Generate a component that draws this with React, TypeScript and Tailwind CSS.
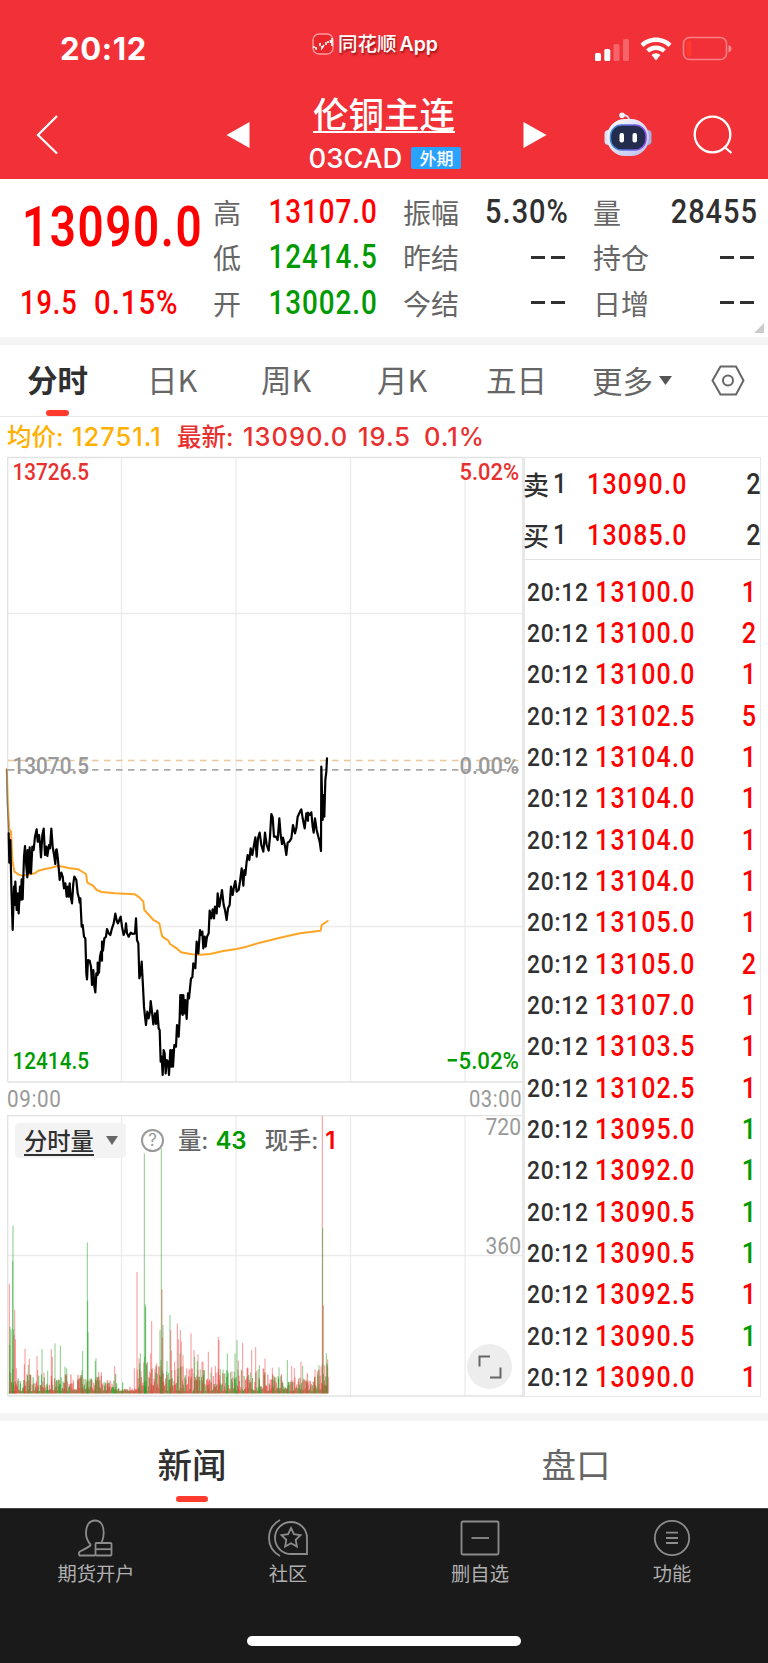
import { Fragment } from 'react'
import type { ReactNode } from 'react'
import { clsx } from 'clsx'

const CJK = "font-['Noto_Sans_CJK_SC',sans-serif]"
const LATIN = "font-['Inter','Noto_Sans_CJK_SC',sans-serif]"

interface INumProps {
    children: ReactNode;
    className?: string;
}

// 窄体数字
function Num({ children, className }: INumProps) {
    return (
        <span
            className={clsx(
                "inline-block whitespace-pre font-['Roboto',sans-serif]",
                className
            )}
        >
            {children}
        </span>
    )
}

function StatusBar() {
    return (
        <div className={clsx("flex h-[92px] items-start text-white", LATIN)}>
            <div className="w-[312px] pl-[60px] pt-[33px] text-[31px] font-bold leading-[32px] tracking-[0.02em]">20:12</div>
            <div className="flex items-center gap-[4px] pt-[31px]">
                <svg width="22" height="22" viewBox="0 0 22 22" fill="none">
                    <rect x="1" y="1" width="20" height="20" rx="6" fill="#e8262c" stroke="#ff9a9c" strokeWidth="1.4" />
                    <path d="M2 13v2M4 14v2h1M8 10v3M10 13v2l2-3M14 9v3M16 8v2M18.500 7v3M20 5v8" stroke="#fff" strokeWidth="1.6" />
                </svg>
                <div className="whitespace-nowrap text-[19.5px] font-medium leading-[26px] [text-shadow:1px_2px_2px_rgba(90,0,0,0.55)]">
                    同花顺<span className="ml-[3px] font-semibold">App</span>
                </div>
            </div>
            <div className="ml-auto flex items-center pr-[36px] pt-[36px]">
                <svg width="35" height="24" viewBox="0 0 35 24" fill="#fff">
                    <rect x="0" y="16" width="6" height="8" rx="1.6" />
                    <rect x="9.3" y="12" width="6" height="12" rx="1.6" />
                    <rect x="18.5" y="7" width="6" height="17" rx="1.6" opacity="0.25" />
                    <rect x="28" y="2" width="6" height="22" rx="1.6" opacity="0.25" />
                </svg>
                <svg className="ml-[10px]" width="32" height="24" viewBox="0 0 32 24" fill="#fff">
                    <path d="M16 0.5c6 0 11.400 2.300 15.500 6.200l-3 3.200C25.200 6.800 20.800 5 16 5S6.800 6.800 3.500 9.900l-3-3.200C4.600 2.800 10 .5 16 .5z" />
                    <path d="M16 8.500c3.800 0 7.300 1.500 9.900 3.900l-3.100 3.200C21 13.900 18.600 12.900 16 12.900s-5 1-6.800 2.700l-3.100-3.200C8.700 10 12.200 8.500 16 8.500z" />
                    <path d="M16 16.300c1.700 0 3.300.7 4.400 1.800L16 23.500l-4.400-5.400c1.100-1.100 2.700-1.800 4.400-1.800z" />
                </svg>
                <svg className="ml-[10px]" width="50" height="25" viewBox="0 0 50 25" fill="none">
                    <rect x="1.500" y="1.500" width="43" height="22" rx="6" stroke="#fff" strokeOpacity="0.4" strokeWidth="1.600" />
                    <rect x="4.500" y="4.500" width="5" height="16" rx="2" fill="#ff3b30" />
                    <path d="M46.500 9v7.500q3-1 3-3.700t-3-3.800z" fill="#fff" fillOpacity="0.45" />
                </svg>
            </div>
        </div>
    )
}

function Robot() {
    return (
        <svg width="48" height="44" viewBox="0 0 48 44">
            <defs>
                <linearGradient id="shell" x1="0" y1="0" x2="1" y2="1">
                    <stop offset="0" stopColor="#ffffff" />
                    <stop offset="1" stopColor="#b9bdea" />
                </linearGradient>
                <linearGradient id="rim" x1="0" y1="0" x2="1" y2="0">
                    <stop offset="0" stopColor="#3b8bd6" />
                    <stop offset="1" stopColor="#8a4bea" />
                </linearGradient>
            </defs>
            <path d="M18 3.500q6-1.500 7.500 5" stroke="#d7d9f0" strokeWidth="2" fill="none" />
            <circle cx="18" cy="3.200" r="2.800" fill="#f3f3fb" />
            <rect x="0.500" y="18" width="8" height="15" rx="4" fill="#dfe0f4" />
            <rect x="39.500" y="18" width="8" height="15" rx="4" fill="#a9aedf" />
            <rect x="3" y="7" width="42" height="37" rx="18" fill="url(#shell)" />
            <rect x="6.500" y="13" width="35.500" height="25" rx="11" fill="#232c4d" stroke="url(#rim)" strokeWidth="1.400" />
            <rect x="15.500" y="21" width="4.500" height="9.500" rx="2" fill="#fff" />
            <rect x="28.500" y="21" width="4.500" height="9.500" rx="2" fill="#fff" />
        </svg>
    )
}

function Header() {
    return (
        <header className="h-[179px] bg-[#f13037]">
            <StatusBar />
            <div className="flex h-[87px] items-start text-white">
                <div className="w-[226px] pl-[36px] pt-[22px]">
                    <svg width="24" height="41" viewBox="0 0 24 41" fill="none" stroke="#fff" strokeWidth="2.200">
                        <path d="M21 2L2 21l19 18.500" />
                    </svg>
                </div>
                <svg className="mt-[30px]" width="24" height="26" viewBox="0 0 24 26" fill="#fff">
                    <path d="M23.500 0v26L0.500 13z" />
                </svg>
                <div className="flex w-[273px] flex-col items-center pr-[5px]">
                    <div className={clsx("mt-[3px] h-[38px] border-b-2 border-white text-[35.500px] font-medium leading-[36px]", CJK)}>伦铜主连</div>
                    <div className="mt-[10px] flex items-center gap-[9px] pl-[2px]">
                        <span className={clsx("text-[27.500px] font-medium leading-[30px]", LATIN)}>03CAD</span>
                        <span className={clsx("h-[22px] w-[50px] rounded-[2px] bg-[#29a3ff] text-center text-[17px] font-medium leading-[21px]", CJK)}>外期</span>
                    </div>
                </div>
                <svg className="mt-[30px]" width="24" height="26" viewBox="0 0 24 26" fill="#fff">
                    <path d="M0.500 0v26L23.500 13z" />
                </svg>
                <div className="ml-[57px] mt-[20px]">
                    <Robot />
                </div>
                <svg className="ml-[41px] mt-[22px]" width="40" height="41" viewBox="0 0 40 41" fill="none" stroke="#fff" strokeWidth="2.300">
                    <circle cx="19.500" cy="20.500" r="17.800" />
                    <path d="M31 32.500l7.500 6.500" />
                </svg>
            </div>
        </header>
    )
}

const stats = [
    [['高', '13107.0', 'text-[#ff0000]'], ['振幅', '5.30%', 'text-[#303030]'], ['量', '28455', 'text-[#303030]']],
    [['低', '12414.5', 'text-[#009a00]'], ['昨结', '--', 'text-[#303030]'], ['持仓', '--', 'text-[#303030]']],
    [['开', '13002.0', 'text-[#009a00]'], ['今结', '--', 'text-[#303030]'], ['日增', '--', 'text-[#303030]']],
]

function Quote() {
    return (
        <section className="flex h-[158px] bg-white">
            <div className="w-[213px] text-[#ff0000]">
                <div className="h-[88px] pl-[22px] pt-[19px]">
                    <Num className="origin-left scale-x-[0.825] text-[55.500px] font-semibold leading-[60px] tracking-[0.035em]">13090.0</Num>
                </div>
                <div className="flex h-[70px] pl-[20px] pt-[15px]">
                    <Num className="w-[74px] origin-left scale-x-[0.8] text-[34px] font-medium leading-[40px] tracking-[0.035em]">19.5</Num>
                    <Num className="origin-left scale-x-[0.86] text-[34px] font-medium leading-[40px] tracking-[0.035em]">0.15%</Num>
                </div>
            </div>
            <div className="grid h-[146.500px] w-[545px] grid-cols-[165px_25px_166px_24px_165px] grid-rows-3 pt-[10px]">
                {stats.map((row, r) =>
                    row.map(([label, value, color], c) => (
                        <Fragment key={label}>
                            {c > 0 && <span />}
                            <div className="flex h-[45.500px] items-center justify-between">
                                <span className={clsx("text-[28px] leading-[40px] text-[#666]", CJK)}>{label}</span>
                                {value === '--' ? (
                                    <span className="flex gap-[6px] pr-[4px]" aria-label={value}>
                                        <i className="h-[3px] w-[14px] bg-[#303030]" />
                                        <i className="h-[3px] w-[14px] bg-[#303030]" />
                                    </span>
                                ) : (
                                    <Num className={clsx(
                                        "origin-right text-[33.500px] font-medium leading-[40px] tracking-[0.035em]",
                                        c === 0 ? 'scale-x-[0.83]' : 'scale-x-[0.865]',
                                        color
                                    )}>{value}</Num>
                                )}
                            </div>
                        </Fragment>
                    ))
                )}
            </div>
            <svg className="-ml-[4px] mt-auto mb-[4px] shrink-0" width="10" height="10" viewBox="0 0 10 10">
                <path d="M10 0v10H0z" fill="#ccc" />
            </svg>
        </section>
    )
}

function PeriodTabs() {
    return (
        <nav className={clsx("flex h-[72px] border-b border-[#e8e8e8] text-[30.500px] leading-[69px] text-[#666]", CJK)}>
            <div className="flex w-[147px] flex-col pl-[27px] font-bold text-[#303030]">
                <span className="h-[65px]">分时</span>
                <i className="ml-[19px] h-[6px] w-[23px] rounded-full bg-[#ff3b30]" />
            </div>
            <span className="w-[114px]">日K</span>
            <span className="w-[116px]">周K</span>
            <span className="w-[109px]">月K</span>
            <span className="w-[106px]">五日</span>
            <div className="flex w-[120px] items-center gap-[6px]">
                更多
                <svg width="13" height="9" viewBox="0 0 13 9"><path d="M0 0h13L6.500 9z" fill="#555" /></svg>
            </div>
            <svg className="mt-[20px] -ml-[1px]" width="34" height="32" viewBox="0 0 34 32" fill="none" stroke="#666" strokeWidth="2">
                <path d="M9.500 1.500h15.500L32.500 15.500 25 29.500H9.500L1.500 15.500z" />
                <circle cx="17" cy="15.500" r="5" />
            </svg>
        </nav>
    )
}

// 单位为 1/3 像素
const pricePoints =
    '26,280 28,368 31,300 34,440 38,570 42,440 44,495 46,425 50,510 53,460 56,520 60,440 62,480 65,418 68,478 72,350 75,318 79,380 82,412 83,330 86,400 89,322 91,390 93,400 97,320 101,330 105,290 110,268 113,305 117,285 120,310 123,352 127,285 131,266 135,345 139,320 142,348 147,315 150,325 154,266 158,320 163,350 166,372 168,330 170,328 173,350 177,395 179,420 184,398 188,410 192,445 196,430 200,470 203,440 206,470 209,430 212,470 216,490 220,430 223,410 229,420 233,460 237,475 239,488 241,475 245,560 248,555 252,590 256,595 259,700 261,718 264,660 269,662 273,680 276,735 280,690 283,740 286,757 289,700 293,705 293,668 297,698 300,650 303,635 306,662 306,605 309,632 313,595 318,590 321,567 326,580 331,585 336,565 341,550 346,521 351,545 354,550 358,540 362,530 366,560 371,585 376,570 378,550 381,580 386,590 392,578 398,582 405,580 408,535 411,600 415,610 418,715 422,700 425,665 429,740 432,800 435,830 438,855 442,815 446,835 450,815 452,783 456,815 460,853 465,820 468,852 472,812 476,865 479,870 482,965 485,950 488,1005 491,930 494,940 497,1000 500,960 504,965 507,1005 511,930 514,980 517,930 519,980 523,915 528,920 531,855 536,890 539,835 541,765 543,820 545,765 548,825 550,765 553,820 556,780 560,837 564,760 567,775 570,745 573,715 577,712 580,670 586,685 590,605 595,640 600,570 604,585 607,575 610,625 614,590 617,620 621,590 626,580 629,512 634,535 638,508 642,535 645,500 650,520 653,460 658,500 662,475 666,450 671,495 675,510 680,540 684,505 689,495 693,440 698,465 702,440 706,423 710,455 716,450 720,425 725,385 730,437 733,390 736,405 740,365 743,345 748,360 752,325 757,345 762,315 766,292 770,350 774,295 779,278 784,315 790,335 795,278 800,315 806,332 810,290 814,222 818,232 822,290 828,290 833,300 838,235 842,285 846,312 849,293 855,318 859,345 863,308 868,305 874,295 879,255 885,280 889,265 893,230 900,215 904,208 908,235 914,265 919,220 924,242 924,218 930,225 934,217 938,260 941,278 945,235 950,270 955,290 959,305 963,333 964,80 968,240 970,165 973,230 976,120 979,95 981,55'

const averagePoints =
    '20,88 24,200 28,268 33,275 37,360 43,395 55,403 65,407 90,403 105,400 115,392 135,387 155,383 172,378 190,380 205,384 235,388 248,396 258,402 262,428 280,438 290,450 305,456 345,460 405,463 418,472 430,485 433,510 447,525 460,540 478,550 483,575 487,590 505,602 510,612 530,625 543,637 575,643 600,644 630,642 670,633 710,627 740,620 780,608 840,593 900,580 962,572 965,555 983,543'

const axisText = "font-['Roboto',sans-serif]"

function PriceChart() {
    return (
        <svg width="522" height="626" viewBox="0 0 522 626" fill="none" className="overflow-visible">
            <g stroke="#ebebeb" strokeWidth="1.300">
                <path d="M121.500 0v625M236 0v625M350.500 0v625M465 0v625M8 156.500h514M8 469.500h514" />
                <path d="M7.700 0.500H522M7.700 0v625M7.700 625H522" stroke="#e2e2e2" />
            </g>
            <path d="M8 303.500h514" stroke="#e8c89c" strokeWidth="1.700" strokeDasharray="6.500 5.500" />
            <path d="M8 312.800h514" stroke="#a8a8a8" strokeWidth="1.700" strokeDasharray="6.500 5.500" />
            <g className={axisText} fontSize="24.300" fontWeight="500">
                <text x="12.500" y="22.500" textLength="76.500" lengthAdjust="spacingAndGlyphs" fill="#e8302f">13726.5</text>
                <text x="459.500" y="22.500" textLength="59.500" lengthAdjust="spacingAndGlyphs" fill="#e8302f">5.02%</text>
                <text x="12.500" y="317" textLength="76.500" lengthAdjust="spacingAndGlyphs" fill="#999">13070.5</text>
                <text x="459.500" y="317" textLength="59.500" lengthAdjust="spacingAndGlyphs" fill="#999">0.00%</text>
                <text x="12.500" y="611.500" textLength="76.500" lengthAdjust="spacingAndGlyphs" fill="#009a00">12414.5</text>
                <text x="446" y="611.500" textLength="73" lengthAdjust="spacingAndGlyphs" fill="#009a00">−5.02%</text>
            </g>
            <g transform="translate(0 283) scale(0.33333)" strokeLinejoin="round" strokeLinecap="round">
                <polyline points={averagePoints} stroke="#ffa526" strokeWidth="6" />
                <polyline points="20,88 22,190 26,280" stroke="#777" strokeWidth="4" />
                <polyline points={pricePoints} stroke="#000" strokeWidth="6.600" />
            </g>
        </svg>
    )
}

// x、顶点 y、涨(r)跌(g)
const spikes =
    '28,612,r 30,740,g 29,795,g 33,748,g 39,437,g 38,543,g 40,748,g 44,690,r 42,765,r 46,778,r 49,865,r 75,806,r 73,853,r 88,836,r 85,855,g 111,828,r 113,870,r 126,807,g 132,878,r 143,872,g 154,807,r 157,830,r 165,790,g 181,797,g 195,860,g 200,865,g 248,813,g 246,870,g 262,487,g 263,662,g 264,757,g 288,835,g 286,843,g 296,876,r 304,876,r 322,900,r 344,858,r 347,882,g 368,907,g 390,920,r 403,865,r 411,576,r 417,835,r 421,820,g 419,850,g 433,220,g 436,673,g 437,682,g 434,830,g 440,850,g 452,820,r 455,723,r 457,865,r 470,850,r 480,750,g 484,205,g 486,628,r 489,735,g 487,772,r 483,840,g 501,843,g 510,705,g 512,750,r 514,812,r 524,845,r 532,730,r 535,778,r 541,750,r 544,784,r 549,825,r 540,820,g 560,865,r 573,760,r 582,810,r 584,830,g 594,823,r 592,843,g 606,845,r 609,845,r 625,815,r 635,862,r 646,858,r 655,771,r 657,780,r 682,820,g 680,870,g 705,820,g 711,780,g 715,842,r 728,788,r 741,865,r 743,862,r 755,810,r 767,801,r 778,855,g 795,836,r 817,863,r 837,862,g 862,840,g 875,858,r 883,865,r 903,845,r 908,858,g 922,880,r 945,868,r 957,856,g 967,108,r 968,443,g 970,675,r 974,856,r 979,820,g 983,838,r 981,850,g'

// 底部密集小量柱：分段高度包络
function envelope(x: number) {
    if (x < 50) return 80
    if (x < 310) return 52
    if (x < 350) return 34
    if (x < 408) return 9
    if (x < 450) return 92
    if (x < 560) return 80
    if (x < 800) return 72
    if (x < 850) return 52
    if (x < 950) return 44
    return 90
}

function buildVolume() {
    let seed = 17
    const next = () => {
        seed = (seed * 16807) % 2147483647
        return seed / 2147483647
    }
    const bars: { x: number; h: number; up: boolean }[] = []
    for (let x = 28; x < 985; x += 1.4) {
        const h = 6 + Math.pow(next(), 1.7) * envelope(x)
        bars.push({ x, h, up: next() > 0.46 })
    }
    spikes.split(' ').forEach((s) => {
        const [x, top, dir] = s.split(',')
        bars.push({ x: Number(x), h: 940 - Number(top), up: dir === 'r' })
    })
    return bars
}

const volume = buildVolume()

function VolumeChart() {
    return (
        <svg width="522" height="282" viewBox="0 0 522 282" fill="none" className="overflow-visible">
            <g stroke="#ebebeb" strokeWidth="1.300">
                <path d="M121.500 0v281M236 0v281M350.500 0v281M465 0v281M8 140.500h514" />
                <path d="M7.700 0.700H522M7.700 0v281M7.700 281H524" stroke="#e2e2e2" />
            </g>
            <g transform="translate(0 -35) scale(0.33333)">
                {volume.map((b, i) => (
                    <rect
                        key={i}
                        x={b.x - 1.600}
                        y={940 - b.h}
                        width="3.200"
                        height={b.h}
                        fill={b.up ? '#f03c3c' : '#1fa01f'}
                        fillOpacity={b.h > 60 ? 0.5 : 0.65}
                    />
                ))}
            </g>
            <g className={axisText} fontSize="24.300" fill="#999">
                <text x="485.500" y="20" textLength="35.500" lengthAdjust="spacingAndGlyphs">720</text>
                <text x="485.500" y="139" textLength="35.500" lengthAdjust="spacingAndGlyphs">360</text>
            </g>
        </svg>
    )
}

function VolumeLegend() {
    return (
        <div className={clsx("absolute left-[15px] top-[8px] flex items-center text-[23.300px] font-medium leading-[35px] text-[#666]", LATIN)}>
            <div className="flex h-[35px] w-[111px] items-center rounded-[4px] bg-[#f2f2f2]/90 pl-[9px]">
                <span className="h-[30px] border-b-2 border-[#303030] leading-[31px] text-[#303030]">分时量</span>
                <svg className="ml-[12px]" width="12" height="9" viewBox="0 0 12 9"><path d="M0 0h12L6 9z" fill="#666" /></svg>
            </div>
            <span className="ml-[15px] h-[23px] w-[23px] rounded-full border-2 border-[#999] bg-white/60 text-center text-[17px] font-normal leading-[19px] text-[#999]">?</span>
            <span className="ml-[14px]">量:</span>
            <span className="ml-[7px] text-[24px] font-semibold text-[#009a00]">43</span>
            <span className="ml-[18px]">现手:</span>
            <span className="ml-[7px] text-[24px] font-semibold text-[#ff0000]">1</span>
        </div>
    )
}

const orders = [
    ['卖1', '13090.0', '2'],
    ['买1', '13085.0', '2'],
]

const ticks: [string, number, boolean][] = [
    ['13100.0', 1, true],
    ['13100.0', 2, true],
    ['13100.0', 1, true],
    ['13102.5', 5, true],
    ['13104.0', 1, true],
    ['13104.0', 1, true],
    ['13104.0', 1, true],
    ['13104.0', 1, true],
    ['13105.0', 1, true],
    ['13105.0', 2, true],
    ['13107.0', 1, true],
    ['13103.5', 1, true],
    ['13102.5', 1, true],
    ['13095.0', 1, false],
    ['13092.0', 1, false],
    ['13090.5', 1, false],
    ['13090.5', 1, false],
    ['13092.5', 1, true],
    ['13090.5', 1, false],
    ['13090.0', 1, true],
]

const priceText = "w-[100px] origin-left scale-x-[0.83] text-[30px] font-medium leading-[40px] text-[#ff0000] tracking-[0.05em]"

function OrderPanel() {
    return (
        <aside className="h-[940px] w-[239px] border-y-[1.500px] border-l-[3px] border-r-[1.500px] border-[#e8e8e8]">
            <div className="h-[102px] border-b border-[#e2e2e2]">
                {orders.map(([side, price, qty]) => (
                    <div key={side} className="flex h-[51px] items-center text-[#303030]">
                        <div className="flex w-[62px] items-center">
                            <span className={clsx("-ml-[2px] w-[30px] text-[26px] font-medium leading-[40px]", CJK)}>{side[0]}</span>
                            <Num className="origin-left scale-x-[0.87] text-[27.500px] font-medium leading-[40px]">{side[1]}</Num>
                        </div>
                        <Num className={priceText}>{price}</Num>
                        <Num className="ml-auto origin-right scale-x-[0.87] text-[29px] font-medium leading-[40px]">{qty}</Num>
                    </div>
                ))}
            </div>
            <div className="pt-[11px]">
                {ticks.map(([price, qty, up], i) => (
                    <div key={i} className="flex h-[41.330px] items-center">
                        <Num className="ml-[2px] w-[68px] origin-left scale-x-[0.86] text-[26.500px] font-medium leading-[40px] tracking-[0.035em] text-[#303030]">20:12</Num>
                        <Num className={priceText}>{price}</Num>
                        <Num className={clsx("ml-auto mr-[4px] origin-right scale-x-[0.84] text-[30px] font-medium leading-[40px]", up ? 'text-[#ff0000]' : 'text-[#009a00]')}>{qty}</Num>
                    </div>
                ))}
            </div>
        </aside>
    )
}

function Charts() {
    return (
        <section>
            <div className={clsx("flex h-[40px] pl-[7px] text-[25.500px] font-medium leading-[40px] tracking-[0.038em] text-[#e8302f]", LATIN)}>
                <span className="w-[65px] whitespace-nowrap text-[24.500px] tracking-normal text-[#ffb000]">均价:</span>
                <span className="w-[105px] text-[#ffb000]">12751.1</span>
                <span className="w-[66px] whitespace-nowrap text-[24.500px] tracking-normal">最新:</span>
                <span className="w-[115px]">13090.0</span>
                <span className="w-[66px]">19.5</span>
                <span>0.1%</span>
            </div>
            <div className="flex">
                <div className="w-[522px]">
                    <PriceChart />
                    <div className="flex h-[32px] items-center justify-between pl-[7px] text-[24.300px] text-[#999]">
                        <Num className="origin-left scale-x-[0.85] tracking-[0.03em]">09:00</Num>
                        <Num className="origin-right scale-x-[0.83] tracking-[0.03em]">03:00</Num>
                    </div>
                    <div className="relative">
                        <VolumeChart />
                        <VolumeLegend />
                        <div className="absolute bottom-[8px] right-[10px] flex h-[45px] w-[45px] items-center justify-center rounded-full bg-[#ededed]">
                            <svg width="24" height="24" viewBox="0 0 24 24" fill="none" stroke="#666" strokeWidth="2">
                                <path d="M1.500 11.500v-10H12M12 22.500h10.500v-10" />
                            </svg>
                        </div>
                    </div>
                </div>
                <OrderPanel />
            </div>
        </section>
    )
}

function NewsTabs() {
    return (
        <div className={clsx("flex h-[87px] text-center text-[34.500px] leading-[84px]", CJK)}>
            <div className="flex w-1/2 flex-col items-center font-medium text-[#303030]">
                <span className="h-[75px]">新闻</span>
                <i className="h-[6px] w-[32px] rounded-full bg-[#ff3b30]" />
            </div>
            <span className="w-1/2 text-[#666]">盘口</span>
        </div>
    )
}

const menu = [
    {
        label: '期货开户',
        icon: (
            <>
                <path d="M15 27q-5-5-5-12c0-8 3.500-12.500 9-12.500s8.700 4.500 8.700 12.500q0 5-2 9M15 27q-2 2-11 6.500-2 1.500-.5 4h15.500" />
                <rect x="19.500" y="25" width="16" height="12.500" rx="1" />
                <path d="M19.500 31.200h16" />
            </>
        ),
    },
    {
        label: '社区',
        icon: (
            <>
                <path d="M12 2Q1 8 1 20t11 18" />
                <path d="M39 36V20A16 16 0 1 0 23 36z" />
                <path d="M23 10l2.900 6.200 6.600.900-4.800 4.700 1.200 6.700-5.900-3.200-5.900 3.200 1.200-6.700-4.800-4.700 6.600-.900z" />
            </>
        ),
    },
    {
        label: '删自选',
        icon: (
            <>
                <rect x="1.500" y="3.500" width="37" height="33" rx="1.500" />
                <path d="M11.500 20h17.500" />
            </>
        ),
    },
    {
        label: '功能',
        icon: (
            <>
                <circle cx="20" cy="20" r="17.200" />
                <path d="M14 14.700h12M14 20h12M14 25h12" />
            </>
        ),
    },
]

function BottomBar() {
    return (
        <footer className="h-[155px] border-t border-[#444] bg-[#1a1a1a]">
            <div className="flex h-[115px]">
                {menu.map((m) => (
                    <div key={m.label} className="flex w-1/4 flex-col items-center pt-[9px]">
                        <svg width="40" height="40" viewBox="0 0 40 40" fill="none" stroke="#8c8c8c" strokeWidth="1.800">{m.icon}</svg>
                        <span className={clsx("mt-[2px] text-[19.300px] leading-[26px] text-[#b0b0b0]", CJK)}>{m.label}</span>
                    </div>
                ))}
            </div>
            <div className="mx-auto mt-[12px] h-[10px] w-[274px] rounded-full bg-white" />
        </footer>
    )
}

export default function App() {
    return (
        <div className="h-[1663px] w-[768px] overflow-hidden bg-white">
            <Header />
            <Quote />
            <div className="h-[8px] bg-[#f4f4f4]" />
            <PeriodTabs />
            <Charts />
            <div className="mt-[16px] h-[8px] bg-[#f4f4f4]" />
            <NewsTabs />
            <BottomBar />
        </div>
    )
}
